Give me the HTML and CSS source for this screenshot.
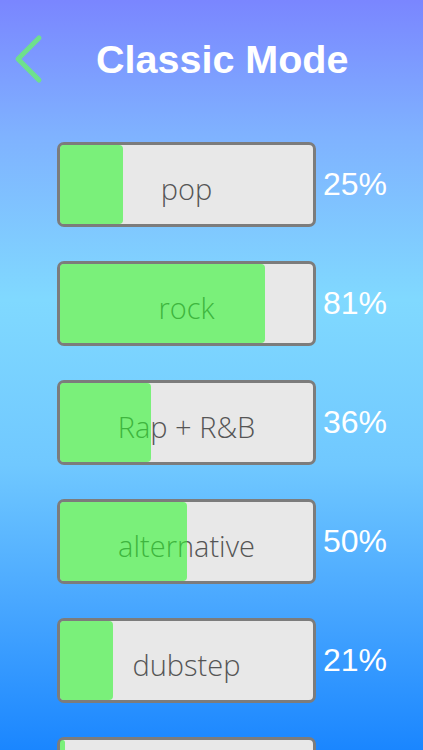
FILE: index.html
```html
<!DOCTYPE html>
<html lang="en">
<head>
    <meta charset="UTF-8">
    <meta name="viewport" content="width=device-width, initial-scale=1.0">
    <title>Classic Mode</title>
    <link rel="stylesheet" href="styles.css">
</head>
<body>
    <div class="screen">
        <header class="top">
            <a href="#" class="back">
                <svg width="32" height="50" viewBox="0 0 32 50">
                    <polyline points="27,4 6,25 27,46" fill="none" stroke="#6ee08c" stroke-width="5" stroke-linecap="round" stroke-linejoin="round"/>
                </svg>
            </a>
            <h1>Classic Mode</h1>
        </header>
        <section class="genres">
            <div class="row">
                <div class="bar">
                    <span class="label">pop</span>
                    <div class="fill" style="width: 25%"></div>
                </div>
                <span class="pct">25%</span>
            </div>
            <div class="row">
                <div class="bar">
                    <span class="label">rock</span>
                    <div class="fill" style="width: 81%"></div>
                </div>
                <span class="pct">81%</span>
            </div>
            <div class="row">
                <div class="bar">
                    <span class="label">Rap + R&amp;B</span>
                    <div class="fill" style="width: 36%"></div>
                </div>
                <span class="pct">36%</span>
            </div>
            <div class="row">
                <div class="bar">
                    <span class="label">alternative</span>
                    <div class="fill" style="width: 50%"></div>
                </div>
                <span class="pct">50%</span>
            </div>
            <div class="row">
                <div class="bar">
                    <span class="label">dubstep</span>
                    <div class="fill" style="width: 21%"></div>
                </div>
                <span class="pct">21%</span>
            </div>
            <div class="row">
                <div class="bar">
                    <div class="fill" style="width: 2%"></div>
                </div>
            </div>
        </section>
    </div>
</body>
</html>
```

FILE: styles.css
```css
body {
    margin: 0;
    padding: 0;
    font-family: 'Liberation Sans', Arial, sans-serif;
}
.screen {
    height: 750px;
    overflow: hidden;
    background: linear-gradient(180deg, #7a86ff 0%, #7fb2ff 18%, #80d9ff 40%, #70c8ff 62%, #4aa8ff 80%, #1a86ff 100%);
}
.top {
    display: flex;
    align-items: center;
    padding-top: 33px;
    height: 52px;
}
.back {
    display: block;
    margin-left: 12px;
    height: 50px;
}
.top h1 {
    margin: 0 0 0 52px;
    color: #fff;
    font-size: 39.5px;
    font-weight: bold;
}
.genres {
    padding: 57px 0 0 57px;
}
.row {
    display: flex;
    align-items: center;
    margin-bottom: 34px;
}
.bar {
    position: relative;
    box-sizing: border-box;
    width: 259px;
    height: 85px;
    border: 3px solid #7c7c7c;
    border-radius: 7px;
    background: #e8e8e8;
    display: flex;
    align-items: center;
    justify-content: center;
}
.label {
    padding-top: 8px;
    font-family: 'Open Sans', sans-serif;
    font-weight: 300;
    font-size: 29px;
    color: #555;
}
.fill {
    position: absolute;
    left: 0;
    top: 0;
    bottom: 0;
    border-radius: 4px;
    background: rgba(49, 245, 49, 0.6);
}
.pct {
    margin-left: 7px;
    color: #fff;
    font-size: 32px;
}
```
